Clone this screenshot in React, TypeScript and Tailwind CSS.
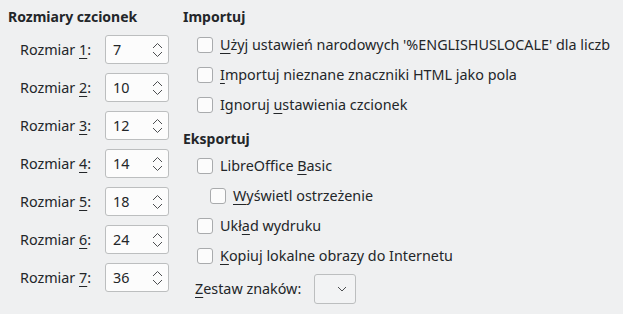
import type { ReactNode } from "react";

const SIZES = ["7", "10", "12", "14", "18", "24", "36"];

function U({ children }: { children: ReactNode }) {
  return <span className="underline decoration-1 underline-offset-[3px]">{children}</span>;
}

function SpinBox({ value }: { value: string }) {
  return (
    <div className="flex h-[29px] w-[64px] items-center justify-between rounded-[3px] border border-[#bcbebf] bg-[#fcfcfc] pl-[7px] pr-[5px]">
      <span>{value}</span>
      <svg width="11" height="16" viewBox="0 0 11 16" fill="none" stroke="#4d4f51" strokeWidth="1">
        <path d="M1 6 L5.5 1.5 L10 6" />
        <path d="M1 10 L5.5 14.5 L10 10" />
      </svg>
    </div>
  );
}

function Check({ children, nested }: { children: ReactNode; nested?: boolean }) {
  return (
    <div className={`flex h-[30px] items-center gap-[7px] ${nested ? "pl-[27px]" : "pl-[14px]"}`}>
      <div className="h-[16px] w-[16px] rounded-[3px] border border-[#a9abad] bg-[#fcfcfc]" />
      <span>{children}</span>
    </div>
  );
}

export default function App() {
  return (
    <div
      className="flex h-[314px] w-[623px] bg-[#eff0f1] text-[14.35px] text-[#232629]"
      style={{ fontFamily: '"Noto Sans", "Open Sans", sans-serif' }}
    >
      <div className="w-[175px] pl-[8px] pt-[7px]">
        <h3 className="h-[20px] text-[14px] font-bold leading-[20px]">Rozmiary czcionek</h3>
        <div className="mt-[8px] flex flex-col gap-[9px] pl-[12px]">
          {SIZES.map((v, i) => (
            <div key={v} className="flex items-center">
              <span className="w-[85px]">
                Rozmiar <U>{i + 1}</U>:
              </span>
              <SpinBox value={v} />
            </div>
          ))}
        </div>
      </div>

      <div className="pl-[8px] pt-[7px]">
        <h3 className="h-[20px] text-[14px] font-bold leading-[20px]">Importuj</h3>
        <div className="mt-[3px]">
          <Check>
            <U>U</U>żyj ustawień narodowych '%ENGLISHUSLOCALE' dla liczb
          </Check>
          <Check>
            <U>I</U>mportuj nieznane znaczniki HTML jako pola
          </Check>
          <Check>
            Ignoruj <U>u</U>stawienia czcionek
          </Check>
        </div>

        <h3 className="mt-[9px] h-[20px] text-[14px] font-bold leading-[20px]">Eksportuj</h3>
        <div className="mt-[2px]">
          <Check>
            LibreOffice <U>B</U>asic
          </Check>
          <Check nested>
            <U>W</U>yświetl ostrzeżenie
          </Check>
          <Check>
            Ukł<U>a</U>d wydruku
          </Check>
          <Check>
            <U>K</U>opiuj lokalne obrazy do Internetu
          </Check>
        </div>

        <div className="mt-[3px] flex h-[30px] items-center pl-[12px]">
          <span className="w-[119px]">
            <U>Z</U>estaw znaków:
          </span>
          <div className="flex h-[30px] w-[42px] items-center justify-end rounded-[3px] border border-[#bcbebf] bg-[#f2f3f4] pr-[8px]">
            <svg width="10" height="6" viewBox="0 0 10 6" fill="none" stroke="#4d4f51" strokeWidth="1">
              <path d="M1 1 L5 5 L9 1" />
            </svg>
          </div>
        </div>
      </div>
    </div>
  );
}
